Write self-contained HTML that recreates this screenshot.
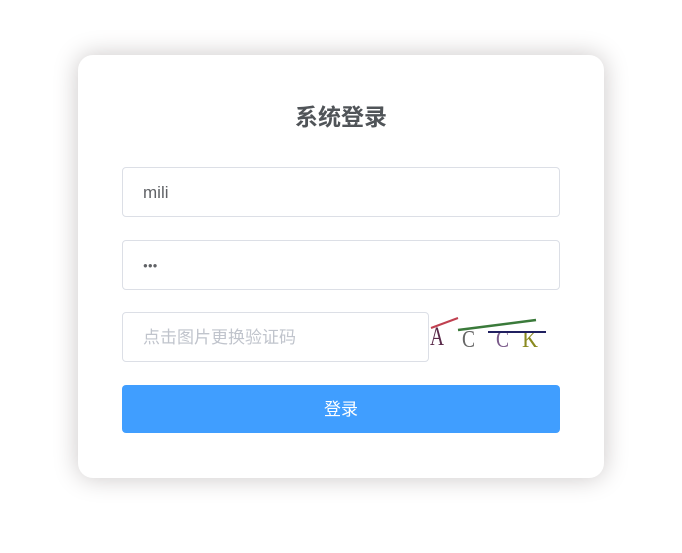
<!DOCTYPE html>
<html><head><meta charset="utf-8"><style>
body{margin:0;width:682px;height:553px;background:#fff;font-family:"Liberation Sans","Noto Sans CJK SC",sans-serif;position:relative;overflow:hidden}
.card{position:absolute;left:78px;top:55px;width:526px;height:423px;border-radius:15px;background:#fff;box-shadow:0 0 25px #cac6c6}
.t{position:absolute;left:0;right:0;top:101px;text-align:center;font-size:23px;font-weight:bold;color:#505458;line-height:32px}
.in{position:absolute;left:122px;width:436px;height:48px;border:1px solid #dcdfe6;border-radius:4px;box-sizing:content-box;font-size:17px;line-height:50px;color:#606266}
.in span{position:absolute;left:20px}
.btn{position:absolute;left:122px;top:385px;width:438px;height:48px;background:#409eff;border-radius:4px;color:#fff;text-align:center;line-height:50px;font-size:17px}
</style></head><body>
<div class="card"></div>
<div class="t">系统登录</div>
<div class="in" style="top:167px"><span>mili</span></div>
<div class="in" style="top:240px"><span style="font-size:8px">●●●</span></div>
<div class="in" style="top:312px;width:305px"><span style="color:#c0c4cc">点击图片更换验证码</span></div>
<svg style="position:absolute;left:428px;top:312px" width="122" height="40">
<text x="2" y="33" font-family="Liberation Serif" font-size="26" transform="translate(0,0)" fill="#5a2a4a" textLength="14" lengthAdjust="spacingAndGlyphs">A</text>
<line x1="3" y1="16" x2="30" y2="6" stroke="#c04050" stroke-width="2"/>
<text x="34" y="35" font-family="Liberation Serif" font-size="24" fill="#666" textLength="13" lengthAdjust="spacingAndGlyphs">C</text>
<text x="68" y="35" font-family="Liberation Serif" font-size="24" fill="#7a5a8a" textLength="13" lengthAdjust="spacingAndGlyphs">C</text>
<text x="94" y="35" font-family="Liberation Serif" font-size="24" fill="#8a8a20" textLength="16" lengthAdjust="spacingAndGlyphs">K</text>
<line x1="30" y1="18" x2="108" y2="8" stroke="#3a7a3a" stroke-width="2.5"/>
<line x1="60" y1="20" x2="118" y2="20" stroke="#202060" stroke-width="2"/>
</svg>
<div class="btn">登录</div>
</body></html>
